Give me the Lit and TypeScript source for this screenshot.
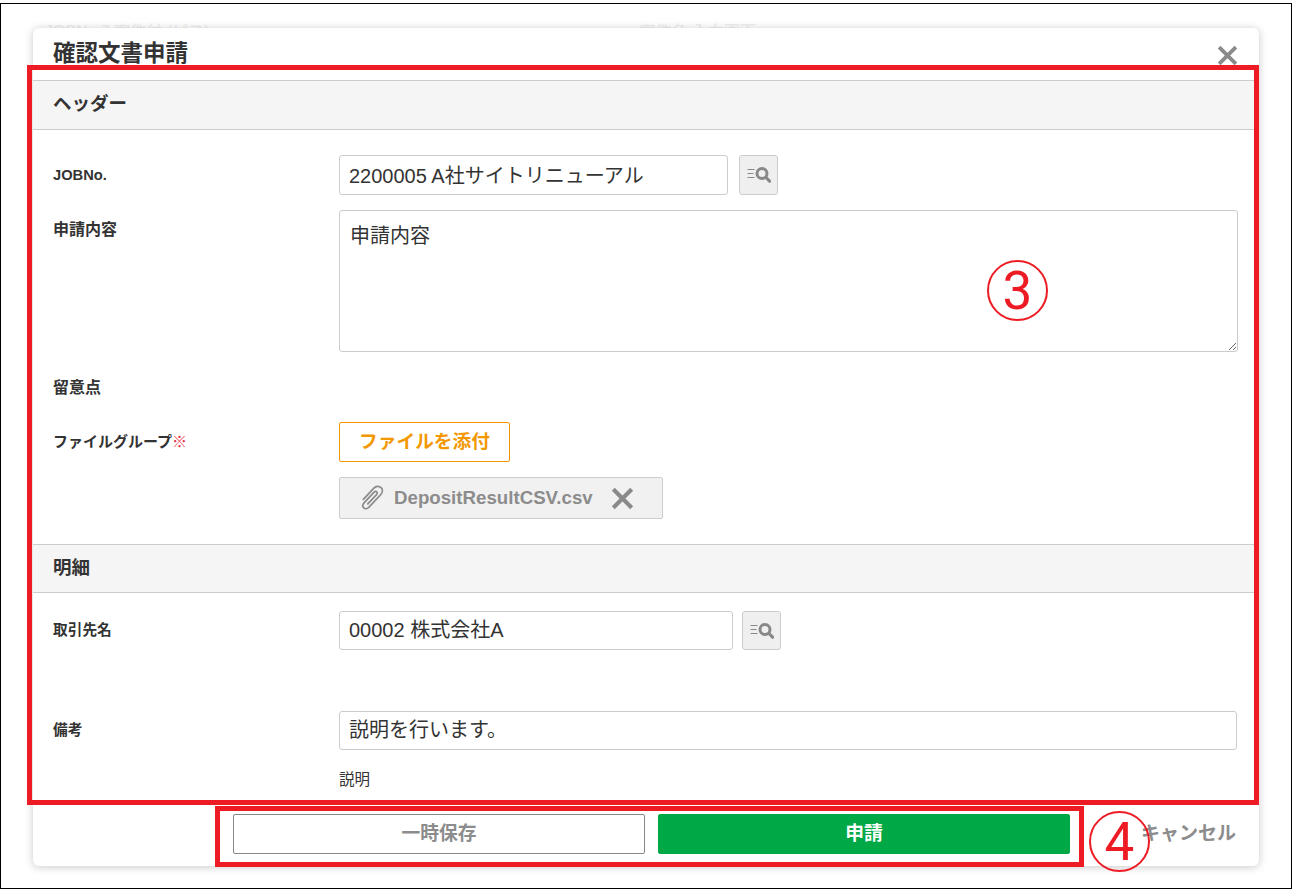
import { LitElement, html, css, svg } from 'lit';
import { customElement } from 'lit/decorators.js';

const closeIcon = (size: number) => html`
  <svg width=${size} height=${size} viewBox="0 0 20 20">
    <path d="M2 2 18 18M18 2 2 18" stroke="#8a8a8a" stroke-width="3.6" fill="none" />
  </svg>
`;

const lookupIcon = html`
  <svg width="24" height="18" viewBox="0 0 24 18">
    <path d="M0.5 3.5h7M0.5 7.5h6M0.5 11.5h7" stroke="#888" stroke-width="1" fill="none" />
    <circle cx="15" cy="7.5" r="5" stroke="#888" stroke-width="3" fill="none" />
    <path d="M19 11.5 22.6 15.2" stroke="#888" stroke-width="3.2" stroke-linecap="round" fill="none" />
  </svg>
`;

const clipIcon = svg`
  <path
    d="M4.6 13.2 13.6 3.6c1.9-2 4.6-2.1 6.2-.5 1.6 1.6 1.4 4.2-.4 6.1L9.2 20c-1.3 1.3-3.2 1.5-4.3.4-1.1-1.1-.9-3 .3-4.3l8.6-9.1c.7-.7 1.7-.8 2.3-.2.6.6.5 1.6-.2 2.3L8.4 17"
    stroke="#8c8c8c" stroke-width="1.5" fill="none" stroke-linecap="round" />
`;

@customElement('app-root')
export class AppRoot extends LitElement {
  static override styles = css`
    :host {
      display: block;
      position: relative;
      width: 1296px;
      height: 894px;
      box-sizing: border-box;
      padding-top: 3px;
      background: #fff;
      font-family: 'Liberation Sans', 'Noto Sans CJK JP', sans-serif;
      color: #333;
    }

    .frame {
      position: relative;
      box-sizing: border-box;
      width: 1292px;
      height: 886px;
      padding: 24px 0 0 32px;
      border: 1px solid #000;
      overflow: hidden;
    }

    .backdrop {
      position: absolute;
      top: 14px;
      left: 44px;
      font-size: 16px;
      color: #eee;
      white-space: nowrap;
    }

    .backdrop span {
      margin-left: 430px;
    }

    .modal {
      position: relative;
      box-sizing: border-box;
      width: 1226px;
      height: 838px;
      background: #fff;
      border-radius: 6px;
      box-shadow: 0 1px 8px rgba(0, 0, 0, 0.22);
    }

    .title {
      display: flex;
      justify-content: space-between;
      height: 52px;
      padding: 14px 21px 0 20px;
      box-sizing: border-box;
      font-size: 22.5px;
      font-weight: 700;
      line-height: 24px;
    }

    .title svg {
      margin-top: 3px;
    }

    .section {
      height: 50px;
      box-sizing: border-box;
      padding-left: 20px;
      background: #f5f5f5;
      border-top: 1px solid #ccc;
      border-bottom: 1px solid #ccc;
      font-size: 18.5px;
      font-weight: 700;
      line-height: 46px;
    }

    .section.detail {
      height: 49px;
      margin-top: 25px;
    }

    .row {
      display: grid;
      grid-template-columns: 286px 1fr;
      padding: 0 20px;
      font-size: 14px;
    }

    .label {
      font-size: 16px;
      font-weight: 700;
      line-height: 18px;
      white-space: nowrap;
    }

    .label.small {
      font-size: 14.7px;
    }

    .label.kana {
      font-size: 15px;
    }

    .label i {
      font-style: normal;
      font-weight: 400;
      color: #e8334a;
    }

    .fields {
      display: flex;
      flex-direction: column;
      align-items: flex-start;
    }

    .lookup {
      display: flex;
      align-items: center;
    }

    input,
    textarea {
      box-sizing: border-box;
      margin: 0;
      padding: 0 9px;
      border: 1px solid #ccc;
      border-radius: 3px;
      background: #fff;
      font: 20px 'Liberation Sans', 'Noto Sans CJK JP', sans-serif;
      color: #333;
      outline: none;
    }

    input {
      height: 40px;
      padding-bottom: 2px;
    }

    input.short {
      height: 39px;
      padding-bottom: 4px;
    }

    textarea {
      display: block;
      width: 899px;
      height: 142px;
      padding: 12px 10px;
      line-height: 26px;
    }

    .search {
      display: flex;
      align-items: center;
      justify-content: center;
      box-sizing: border-box;
      width: 39px;
      height: 40px;
      padding: 0;
      background: #efefef;
      border: 1px solid #ccc;
      border-radius: 3px;
    }

    .search.short {
      height: 39px;
    }

    .attach {
      box-sizing: border-box;
      width: 171px;
      height: 40px;
      padding: 0 0 5px;
      background: #fff;
      border: 1px solid #f39800;
      border-radius: 2px;
      font: 700 18.7px 'Liberation Sans', 'Noto Sans CJK JP', sans-serif;
      color: #f39800;
    }

    .file {
      display: flex;
      align-items: center;
      box-sizing: border-box;
      width: 324px;
      height: 42px;
      margin-top: 15px;
      padding-left: 18px;
      background: #f1f1f1;
      border: 1px solid #ccc;
      border-radius: 2px;
      font-size: 18.7px;
      font-weight: 700;
      color: #8c8c8c;
    }

    .file svg:last-child {
      margin-left: 18px;
    }

    .file span {
      margin-left: 8px;
    }

    .note {
      margin-top: 20px;
      font-size: 15.5px;
      line-height: 20px;
    }

    .footer {
      display: flex;
      align-items: center;
      margin-top: 24px;
      padding-left: 200px;
    }

    .footer button {
      box-sizing: border-box;
      width: 412px;
      height: 40px;
      padding: 0 0 5px;
      border-radius: 2px;
      font: 700 18.8px 'Liberation Sans', 'Noto Sans CJK JP', sans-serif;
    }

    .save {
      margin-right: 13px;
      background: #fff;
      border: 1px solid #888;
      color: #8c8c8c;
    }

    .apply {
      background: #00a846;
      border: 1px solid #00a846;
      color: #fff;
    }

    .cancel {
      margin: 0 0 5px 71px;
      font-size: 19px;
      font-weight: 700;
      color: #8c8c8c;
    }

    .mark {
      position: absolute;
      box-sizing: border-box;
      border: 5px solid #ed1c24;
      pointer-events: none;
    }

    .circled {
      position: absolute;
      box-sizing: border-box;
      display: flex;
      align-items: center;
      justify-content: center;
      width: 61px;
      height: 61px;
      border: 2px solid #ed1c24;
      border-radius: 50%;
      font-family: 'Roboto', sans-serif;
      font-size: 53px;
      color: #ed1c24;
    }
  `;

  override render() {
    return html`
      <div class="frame">
        <div class="backdrop">JOBNo.7 案件付 (ピス)<span>案件名 入力画面</span></div>
        <div class="modal">
          <div class="title">
            <span>確認文書申請</span>
            ${closeIcon(21)}
          </div>
          <div class="section">ヘッダー</div>

          <div class="row" style="margin-top:25px">
            <div class="label small" style="margin-top:11px">JOBNo.</div>
            <div class="lookup">
              <input style="width:389px" value="2200005 A社サイトリニューアル" />
              <button class="search" style="margin-left:11px">${lookupIcon}</button>
            </div>
          </div>

          <div class="row" style="margin-top:15px">
            <div class="label" style="margin-top:11px">申請内容</div>
            <textarea>申請内容</textarea>
          </div>

          <div class="row" style="margin-top:27px">
            <div class="label">留意点</div>
            <div></div>
          </div>

          <div class="row" style="margin-top:25px">
            <div class="label kana" style="margin-top:11px">ファイルグループ<i>※</i></div>
            <div class="fields">
              <button class="attach">ファイルを添付</button>
              <div class="file">
                <svg width="28" height="28" viewBox="0 0 24 24">${clipIcon}</svg>
                <span>DepositResultCSV.csv</span>
                ${closeIcon(23)}
              </div>
            </div>
          </div>

          <div class="section detail">明細</div>

          <div class="row" style="margin-top:18px">
            <div class="label small" style="margin-top:10px">取引先名</div>
            <div class="lookup">
              <input class="short" style="width:394px" value="00002 株式会社A" />
              <button class="search short" style="margin-left:9px">${lookupIcon}</button>
            </div>
          </div>

          <div class="row" style="margin-top:61px">
            <div class="label small" style="margin-top:10px">備考</div>
            <div class="fields">
              <input class="short" style="width:898px" value="説明を行います。" />
              <div class="note">説明</div>
            </div>
          </div>

          <div class="footer">
            <button class="save">一時保存</button>
            <button class="apply">申請</button>
            <span class="cancel">キャンセル</span>
          </div>
        </div>

        <div class="mark" style="left:26px;top:61px;width:1232px;height:740px"></div>
        <div class="mark" style="left:214px;top:802px;width:869px;height:61px"></div>
        <div class="circled" style="left:986px;top:256px">3</div>
        <div class="circled" style="left:1088px;top:807px">4</div>
      </div>
    `;
  }
}
